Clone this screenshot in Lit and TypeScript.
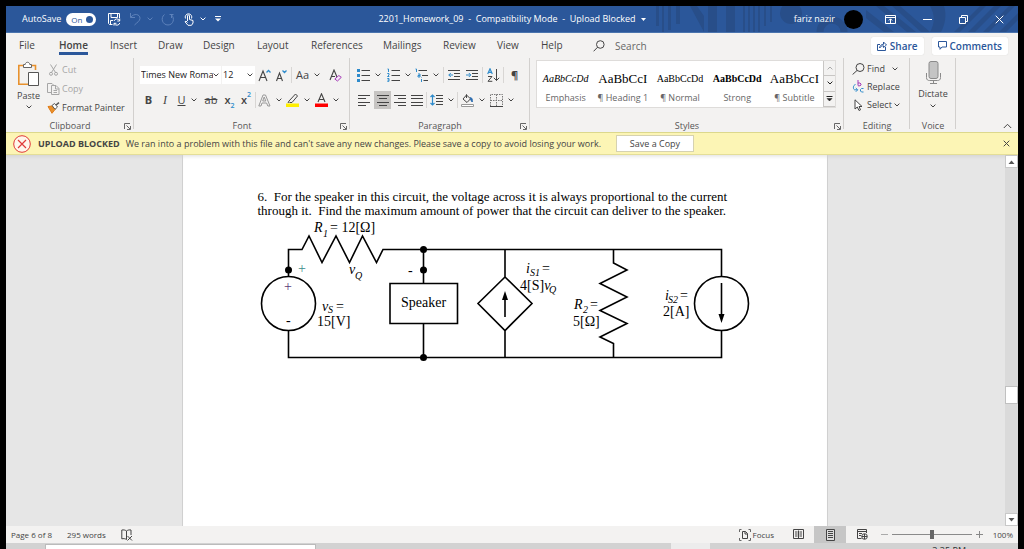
import { LitElement, html, svg, css, TemplateResult } from "lit";
import { customElement, property, state } from "lit/decorators.js";
import { classMap } from "lit/directives/class-map.js";

const icon = (w: number, h: number, body: unknown) =>
  html`<svg width=${w} height=${h} viewBox="0 0 ${w} ${h}" fill="none" stroke="#444" stroke-width="1" aria-hidden="true">${body}</svg>`;

const chevron = (color = "#444") => icon(6, 4, svg`<path d="M.6 .6L3 3L5.4 .6" stroke=${color}/>`);

const INK = "#444";
const BLUE = "#2e8bcb";

const icons = {
  save: icon(14, 14, svg`<g stroke="#fff"><path d="M5.5 12.5H2.5L1.5 11.5V1.5H12.5V6M4 1.5V5.5H10.5V1.5M3.5 12V8.5H6"/><path d="M7 9a3 3 0 0 1 5.5-.5M12.7 6.5V9H10.3M12.8 11a3 3 0 0 1-5.4 .8M7 13.6V11.3H9.4"/></g>`),
  undo: icon(12, 14, svg`<path stroke="#5d82bb" d="M1.5 1V5.5H6M1.7 5.3C5 1 11 2 11 6.3C11 9 8 10.500 5.500 13"/>`),
  redo: icon(14, 13, svg`<path stroke="#5d82bb" d="M3.500 1.500C-1 5 1.500 12 7 12S14 5 10.500 2M8.500 1.500H12.500M10.500 2V5"/>`),
  touch: icon(11, 14, svg`<g stroke="#fff"><path d="M4.500 9V4a1 1 0 0 1 2 0V7.500L10 8.500V11L8.500 13.300H5L2 9.800L3 9L4.500 10.500"/><path d="M2.500 6.500a3.300 3.300 0 1 1 6 0"/></g>`),
  customize: icon(8, 6, svg`<path stroke="#fff" d="M1 .5H7"/><path fill="#fff" stroke="none" d="M1 2.500H7L4 5.500Z"/>`),
  caret: icon(5, 3, svg`<path fill="#fff" stroke="none" d="M0 0H5L2.500 3Z"/>`),
  ribbonMode: icon(11, 9, svg`<g stroke="#fff"><path d="M.5 .5H10.500V8.500H.5ZM.5 2.500H10.500M5.500 8V4M3.800 5.500L5.500 3.800L7.200 5.500"/></g>`),
  minimize: icon(9, 9, svg`<path stroke="#fff" d="M0 4.500H9"/>`),
  restore: icon(9, 9, svg`<path stroke="#fff" d="M.5 2.500H6.500V8.500H.5ZM2.500 2.500V.5H8.500V6.500H6.500"/>`),
  close: icon(9, 9, svg`<path stroke="#fff" d="M.7 .7L8.300 8.300M8.300 .7L.7 8.300"/>`),
  search: icon(12, 12, svg`<circle cx="7.300" cy="4.500" r="3.800"/><path d="M4.600 7.200L.6 11.300"/>`),
  share: icon(10, 10, svg`<g stroke="#2b579a"><path d="M3 3.500H.5V9.500H8.500V6"/><path d="M2.500 7C3 4.500 4.500 3.300 6.500 3.300V1L9.500 4L6.500 6.500V4.800C5 4.800 3.800 5.500 2.500 7Z"/></g>`),
  comment: icon(9, 9, svg`<path stroke="#2b579a" d="M.5 .5H8.500V6H4L2 8.300V6H.5Z"/>`),
  paste: icon(23, 26, svg`<path stroke="#e8912d" stroke-width="1.600" d="M6 4.500H1.800V23.200H11M15 4.500H18.500V9"/><path fill="#fff" stroke="#666" d="M6.500 6.500V3.500H8.200C8.500 .5 12.500 .5 12.800 3.500H14.500V6.500Z"/><path fill="#fff" stroke="#555" d="M11.500 11.500H21.500V24.500H11.500Z"/>`),
  cut: icon(9, 12, svg`<g stroke="#a6a6a6"><path d="M1.500 .5L6.500 8.500M7.500 .5L2.500 8.500"/><circle cx="2" cy="9.800" r="1.500"/><circle cx="7" cy="9.800" r="1.500"/></g>`),
  copy: icon(13, 12, svg`<g stroke="#a6a6a6"><path d="M4 9.500H.5V.5H5L6.500 2"/><path d="M4.500 2.500H9L12 5.500V11.500H4.500ZM8.500 2.500V6H12M6.500 7.500H10M6.500 9.500H10"/></g>`),
  painter: icon(13, 12, svg`<path fill="#e8912d" stroke="#e07b16" d="M1 4.500L5 4L8 7.500L5 11.300Z"/><path fill="#fff" stroke="#555" d="M5 3.500L7.500 1.500L10.500 5L8 7.300Z"/><path stroke="#555" stroke-width="1.500" d="M9 3L12 .7"/>`),
  growA: icon(14, 13, svg`<path stroke-width="1.100" d="M1 12L5 2L9 12M2.500 8.500H7.500"/><path stroke=${BLUE} stroke-width="1.300" d="M8.500 3.500L10.500 1.500L12.500 3.500"/>`),
  shrinkA: icon(13, 13, svg`<path stroke-width="1.100" d="M1.500 12L4.500 4L7.500 12M2.500 9.500H6.500"/><path stroke=${BLUE} stroke-width="1.300" d="M7.500 1.500L9.500 3.500L11.500 1.500"/>`),
  clear: icon(13, 13, svg`<path stroke-width="1.100" d="M1 11L5 1L8 8M2.500 7.500H6"/><path fill="#f5e6f8" stroke="#a33bb5" d="M5.800 10L9.800 6.500L12.300 8.300L8.500 12Z"/>`),
  effects: icon(13, 13, svg`<path stroke="#999" d="M.8 12L5 1H7.500L12 12H9.800L8.600 9H4L3 12ZM4.700 7H7.800L6.200 3Z"/>`),
  highlight: icon(13, 14, svg`<path stroke=${INK} d="M3 8L9.500 1L11.500 3L6 9.500H3.500M3 8L2 10"/><path fill="#ffef00" stroke="none" d="M0 10.500H13V14H0Z"/>`),
  fontColor: icon(13, 14, svg`<path stroke-width="1.100" d="M3 9L6.500 .8L10 9M4.200 6.500H8.800"/><path fill="#f00" stroke="none" d="M0 10.500H13V14H0Z"/>`),
  bullets: icon(13, 13, svg`<path fill=${BLUE} stroke="none" d="M0 0H3V3H0ZM0 5H3V8H0ZM0 10H3V13H0Z"/><path d="M4.500 1.500H13M4.500 6.500H13M4.500 11.500H13"/>`),
  numbers: icon(13, 14, svg`<path stroke=${BLUE} d="M.5 1H1.500V4M.3 5.500H2V7L.5 8.500H2.300M.3 10.500H2V13.300H.3M.6 12H2"/><path d="M4.500 2.500H13M4.500 7.500H13M4.500 12.500H13"/>`),
  multi: icon(13, 14, svg`<path stroke=${BLUE} d="M.5 1H1.500V4M3 6H5V9H3V7.500H5M6.500 11V14M6.500 9.500V10"/><path d="M3.500 2.500H12M7 7.500H13M8.500 12.500H13"/>`),
  outdent: icon(12, 12, svg`<path d="M0 1.500H12M6 4.500H12M6 7.500H12M0 10.500H12"/><path stroke=${BLUE} d="M5 6H.8M2.800 4L.8 6L2.800 8"/>`),
  indent: icon(12, 12, svg`<path d="M0 1.500H12M6 4.500H12M6 7.500H12M0 10.500H12"/><path stroke=${BLUE} d="M0 6H4.500M2.800 4L4.800 6L2.800 8"/>`),
  sort: icon(13, 14, svg`<path stroke=${BLUE} stroke-width="1.200" d="M.7 6L3 .8L5.300 6M1.500 4.300H4.500"/><path d="M1 8.500H5L1 13.300H5.300M9.500 1V12.500M6.800 9.800L9.500 12.500L12.200 9.800"/>`),
  left: icon(12, 11, svg`<path d="M0 .5H12M0 3.500H8M0 7.500H12M0 10.500H8"/>`),
  center: icon(12, 11, svg`<path d="M0 .5H12M2 3.500H10M0 7.500H12M2 10.500H10"/>`),
  right: icon(12, 11, svg`<path d="M0 .5H12M4 3.500H12M0 7.500H12M4 10.500H12"/>`),
  justify: icon(12, 11, svg`<path d="M0 .5H12M0 3.500H12M0 7.500H12M0 10.500H12"/>`),
  spacing: icon(13, 12, svg`<path stroke=${BLUE} stroke-width="1.200" d="M2.500 1V11M.5 3L2.500 1L4.500 3M.5 9L2.500 11L4.500 9"/><path d="M6 1.500H13M6 4.500H13M6 7.500H13M6 10.500H13"/>`),
  bucket: icon(13, 13, svg`<path d="M5.500 1L9.500 4.800L6 8.500L2 5ZM5.500 .3V4"/><path fill="#2b6cb0" stroke="#2b6cb0" d="M9.500 3.500C11.500 4 11.500 6 11.200 8L9.800 6Z"/><path fill="#fff" stroke="#999" d="M.5 10.500H12.500V12.500H.5Z"/>`),
  borders: icon(13, 13, svg`<path stroke="#777" stroke-dasharray="1.500 1" d="M.5 12V.5H12.500V12M6.500 .5V12M.5 6.500H12.500"/><path d="M0 12.500H13"/>`),
  find: icon(13, 12, svg`<circle cx="8" cy="4.500" r="4"/><path d="M5 7.500L.6 11.500"/>`),
  replace: icon(12, 13, svg`<g stroke="#a33bb5"><path d="M5.500 0V5.500M5.500 3H7.500L8.500 4V5L7.500 5.800H5.500"/></g><g stroke=${BLUE}><path d="M3 4.500C.5 5 .3 9 2 9.800H5M3.300 8L5.200 9.800L3.300 11.800M11 8.500H9L8 9.500V11L9 12H11"/></g>`),
  select: icon(9, 12, svg`<path fill="#fff" d="M1 .8V10L3.300 8L5 11.500L6.500 10.800L5 7.500H8Z"/>`),
  mic: icon(15, 23, svg`<rect x="3" y=".5" width="9" height="17" rx="2" fill="#c4c4c4" stroke="#8a8a8a"/><path stroke="#8a8a8a" d="M.5 12V16.500C.5 19 2 19.500 3.500 19.500H11.500C13 19.500 14.500 19 14.500 16.500V12M7.500 19.500V22M4 22.500H11"/>`),
  launcher: icon(7, 7, svg`<path stroke="#666" d="M.5 6V.5H6M2.500 2.500L6 6M6.500 3V6.500H3"/>`),
  collapse: icon(9, 6, svg`<path d="M.8 5L4.500 1.300L8.200 5"/>`),
  blocked: icon(18, 18, svg`<g stroke="#e03a3a"><circle cx="9" cy="9" r="8.300" fill="#fff6ec"/><path stroke-width="1.200" d="M5 5L13 13M13 5L5 13"/></g>`),
  dismiss: icon(7, 7, svg`<path d="M.7 .7L6.300 6.300M6.300 .7L.7 6.300"/>`),
  proof: icon(12, 12, svg`<path d="M5.500 2V10.500M5.500 2C4 .8 2.500 .8 .8 1V9.800C2.500 9.500 4 9.500 5.500 10.500M5.500 2C7 .8 8.500 .8 10 1V6M6.500 7L11 11.500M11 7L6.500 11.500"/>`),
  focus: icon(12, 12, svg`<path stroke="#666" d="M2.500 .5H.5V3M.5 9V11.500H2.500M9.500 .5H11.500V3M11.500 9V11.500H9.500"/><path d="M3.500 2.500H6.500L8.500 4.500V9.500H3.500ZM6 2.500V5H8.500"/>`),
  read: icon(11, 11, svg`<path d="M5.500 1.500V10M.5 .5H10.500V9.500H.5ZM2 3H4.500M2 5H4.500M2 7H4.500M6.500 3H9M6.500 5H9M6.500 7H9"/>`),
  print: icon(9, 12, svg`<path fill="#dcdcdc" d="M.5 .5H8.500V11.500H.5Z"/><path d="M2 2.500H7M2 4.500H7M2 6.500H7M2 8.500H7"/>`),
  web: icon(11, 11, svg`<path d="M4.500 9.500H.5V.5H9.500V4M.5 2.500H9.500M2 4.500H5M2 6.500H4"/><circle cx="7.500" cy="7.500" r="2.800"/><path d="M5 7.500H10M7.500 5V10"/>`),
};

/** Named block of the ribbon with a caption along its bottom edge. */
@customElement("ribbon-group")
export class RibbonGroup extends LitElement {
  @property() label = "";
  @property({ type: Boolean }) launcher = false;

  static styles = css`
    :host { display: flex; flex-direction: column; box-sizing: border-box; background: linear-gradient(#d2d0ce, #d2d0ce) right top / 1px 71px no-repeat; }
    .body { flex: 1; min-height: 0; }
    .foot { display: grid; grid-template-columns: 10px 1fr 10px; align-items: center; height: 12px; font-size: 9px; color: #555; text-align: center; white-space: nowrap; }
    .foot span { grid-column: 2; }
    button { border: 0; padding: 0; background: none; display: flex; }
    svg { display: block; }
  `;

  render() {
    return html`
      <div class="body"><slot></slot></div>
      <div class="foot">
        <span>${this.label}</span>
        ${this.launcher ? html`<button aria-label="${this.label} settings">${icons.launcher}</button>` : ""}
      </div>`;
  }
}

/** The circuit that belongs to problem 6. */
@customElement("circuit-figure")
export class CircuitFigure extends LitElement {
  static styles = css`
    :host { display: block; }
    svg { display: block; }
    text { font: 14px "Liberation Serif", serif; fill: #000; }
    text.i, .i { font-style: italic; }
    text.sub { font-style: italic; font-size: 10px; }
    text.teal { fill: #3a8c8c; }
    text.plum { fill: #5a3a78; }
    .wire { fill: none; stroke: #000; stroke-width: 1.600; }
  `;

  render() {
    return html`<svg width="492" height="144" viewBox="258 218 492 144" role="img" aria-label="Circuit diagram">
      <g class="wire">
        <path d="M288.500 277V249.500H302L309 236L322 262.500L336 236L349.500 262.500L362.500 236L376.500 262.500L383 249.500H721.500V277"/>
        <path d="M288.500 330V357.500H721.500V330"/>
        <circle cx="288.500" cy="303.500" r="27"/>
        <circle cx="721.500" cy="303.500" r="27"/>
        <path d="M423.500 249.500V283.500M423.500 323.500V357.500M390 283.500H457.500V323.500H390Z"/>
        <path d="M505 249.500V277L532 303.500L505 330.500L478 303.500L505 277M505 330.500V357.500"/>
        <path d="M613.500 249.500V263L627 270L600 283.500L627 297L600 310.500L627 323.500L600 337L613.500 343.500V357.500"/>
        <path d="M505 317V297M721.500 283V316"/>
      </g>
      <path d="M505 291L508 300H502ZM721.500 323L718.500 314H724.500Z"/>
      <circle cx="288.500" cy="270" r="3.500"/>
      <circle cx="423.500" cy="249.500" r="3.500"/>
      <circle cx="423.500" cy="270" r="3.500"/>
      <circle cx="423.500" cy="357.500" r="3.500"/>
      <text class="i" x="314" y="232">R</text><text class="sub" x="323" y="237">1</text><text x="330" y="232">= 12[Ω]</text>
      <text class="teal" x="298" y="273">+</text>
      <text class="plum" x="284" y="291">+</text>
      <text x="286" y="325">-</text>
      <text class="i" x="349" y="274">v</text><text class="sub" x="355" y="279">Q</text>
      <text x="408" y="275">-</text>
      <text class="i" x="322" y="311">v</text><text class="sub" x="328" y="313">S</text><text x="336" y="311">=</text>
      <text x="317" y="326">15[V]</text>
      <text x="401" y="307">Speaker</text>
      <text class="i" x="526" y="273">i</text><text class="sub" x="530" y="276">S1</text><text x="542" y="273">=</text>
      <text x="520" y="290">4[S]<tspan class="i">v</tspan></text><text class="sub" x="549" y="293">Q</text>
      <text class="i" x="574" y="309">R</text><text class="sub" x="583" y="313">2</text><text x="590" y="309">=</text>
      <text x="573" y="326">5[Ω]</text>
      <text class="i" x="665" y="300">i</text><text class="sub" x="668" y="303">S2</text><text x="680" y="300">=</text>
      <text x="663" y="316">2[A]</text>
    </svg>`;
  }
}

@customElement("app-root")
export class AppRoot extends LitElement {
  @state() private tab = "Home";
  @state() private zoomLevel = 100;

  private tabs = ["File", "Home", "Insert", "Draw", "Design", "Layout", "References", "Mailings", "Review", "View", "Help"];
  private gallery = [
    { name: "Emphasis", sample: "AaBbCcDd", kind: "emphasis" },
    { name: "¶ Heading 1", sample: "AaBbCcI", kind: "large" },
    { name: "¶ Normal", sample: "AaBbCcDd", kind: "normal" },
    { name: "Strong", sample: "AaBbCcDd", kind: "strong" },
    { name: "¶ Subtitle", sample: "AaBbCcI", kind: "large" },
  ];

  static styles = css`
    :host { display: flex; flex-direction: column; box-sizing: border-box; height: 100vh; padding: 6px 6px 0; background: #000; font: 10px/14px "Open Sans", "Noto Sans", sans-serif; color: #444; }
    * { box-sizing: border-box; }
    svg { display: block; flex: none; }
    button, input, select { font: inherit; color: inherit; border: 0; padding: 0; margin: 0; background: none; border-radius: 0; }
    button { display: flex; align-items: center; white-space: nowrap; }

    .title { position: relative; display: grid; grid-template-columns: 1fr auto 1fr; align-items: center; height: 27px; flex: none; background: #2b579a; color: #fff; border-bottom: 1px solid #4a74ae; font-size: 9px; }
    .art { position: absolute; right: 0; top: 0; }
    .quick { display: flex; align-items: center; padding-left: 16px; }
    .auto { display: flex; align-items: center; gap: 5px; }
    .switch { display: grid; width: 30px; height: 13px; }
    .switch > * { grid-area: 1 / 1; }
    .switch input { appearance: none; width: 30px; height: 13px; border-radius: 7px; background: #fff; display: flex; align-items: center; justify-content: flex-end; padding-right: 3px; }
    .switch input::after { content: ""; width: 7px; height: 7px; border-radius: 50%; background: #2b579a; }
    .switch span { color: #2b579a; font-size: 8px; line-height: 13px; padding-left: 5px; pointer-events: none; }
    .tools { display: flex; align-items: center; gap: 8px; padding-left: 11px; }
    .tools .split { gap: 6px; }
    .name { gap: 5px; position: relative; }
    .account { display: flex; align-items: center; justify-content: flex-end; position: relative; padding-right: 14px; }
    .avatar { width: 19px; height: 19px; border-radius: 50%; background: #000; margin: 0 22px 0 9px; }
    .window { display: flex; gap: 27px; }

    .tabs { display: flex; align-items: center; height: 25px; flex: none; background: #f3f2f1; padding: 0 10px 0 13px; }
    .strip { display: grid; align-self: flex-start; grid-template-columns: 40px 51px 48px 45px 54px 54px 72px 60px 54px 44px 52px; }
    .tab { justify-self: start; height: 22px; border-bottom: 3px solid transparent; border-top: 4px solid transparent; }
    .tab.on { font-weight: 600; border-bottom-color: #2b579a; }
    .search { display: flex; align-items: center; gap: 10px; flex: 1; }
    .search input { width: 60px; }
    .search input::placeholder { color: #666; opacity: 1; }
    .action { height: 18px; padding: 0 6px; gap: 3px; background: #fff; color: #2b579a; font-weight: 600; border-radius: 2px; box-shadow: 0 0 1px #c8c6c4; }
    .action + .action { margin-left: 8px; }

    .ribbon { display: flex; flex: none; height: 74px; background: #f3f2f1; font-size: 9px; line-height: 12px; }
    .clipboard { width: 128px; }
    .font { width: 216px; }
    .paragraph { width: 180px; }
    .styles { flex: 1; min-width: 0; }
    .editing { width: 66px; }
    .voice { width: 46px; }
    .tail { width: 62px; display: flex; align-items: flex-end; justify-content: flex-end; padding: 0 6px 3px 0; }
    .clip { display: flex; padding: 3px 0 0 11px; gap: 7px; }
    .big { flex-direction: column; gap: 3px; align-self: flex-start; }
    .list { display: flex; flex-direction: column; gap: 6px; padding-top: 2px; }
    .item { height: 13px; gap: 2px; }
    .item.off { color: #a6a6a6; }
    .item svg:first-child { width: 13px; }
    .rows { display: flex; flex-direction: column; gap: 7px; padding: 8px 0 0 6px; }
    .row { display: grid; align-items: center; justify-items: center; height: 18px; }
    .font1 { grid-template-columns: 82px 34px 17px 17px 2px 32px 22px; }
    .font2 { grid-template-columns: 17px 16px 28px 20px 17px 16px 2px 28px 28px 30px; }
    .para1 { grid-template-columns: 30px 29px 28px 4px 18px 18px 3px 18px 3px 19px; }
    .para2 { grid-template-columns: 20px 17px 17px 17px 3px 28px 2px 30px 28px; }
    .rows.para { padding-left: 4px; }
    .row button { justify-content: center; gap: 5px; height: 18px; font-size: 11px; }
    .row button.on { width: 17px; background: #c6c4c2; }
    .rule { width: 1px; height: 16px; background: #d8d6d4; }
    .combo { display: grid; grid-template-columns: 1fr 8px; align-items: center; background: #fff; height: 18px; width: 81px; color: #222; justify-self: start; }
    .combo.small { width: 33px; }
    .combo select { appearance: none; grid-area: 1 / 1; width: 100%; height: 18px; padding-left: 1px; overflow: hidden; }
    .combo svg { grid-area: 1 / 2; }
    .b { font-weight: 700; }
    .i { font: italic 12px "Liberation Serif", serif; }
    .u { text-decoration: underline; }
    .s { text-decoration: line-through; }
    .low, .high { font-size: 7px; color: #2e8bcb; line-height: 7px; }
    .low { align-self: flex-end; }
    .high { align-self: flex-start; }
    .row .tight { gap: 0; font-weight: 600; }
    .gallery { display: flex; margin: 2px 8px 0 6px; height: 48px; border: 1px solid #dedcda; background: #fff; }
    .style { flex: 1 1 0; min-width: 0; flex-direction: column; justify-content: flex-end; gap: 6px; padding-bottom: 3px; overflow: hidden; color: #666; }
    .sample { font: 10px/14px "Liberation Serif", serif; color: #000; }
    .sample.large { font-size: 13px; }
    .sample.strong { font-weight: 700; }
    .sample.emphasis { font-style: italic; }
    .spin { display: grid; grid-template-rows: 1fr 1fr 1fr; width: 12px; background: #f3f2f1; border-left: 1px solid #c8c6c4; }
    .spin button { justify-content: center; border-bottom: 1px solid #c8c6c4; }
    .edit { padding: 4px 0 0 8px; gap: 5px; display: flex; flex-direction: column; }
    .talk { padding-top: 3px; display: flex; justify-content: center; }
    .talk .big { gap: 4px; }

    .message { display: flex; align-items: center; flex: none; height: 23px; padding: 0 8px 0 7px; background: #fcf5b5; border-top: 1px solid #dcd88c; border-bottom: 1px solid #e4de98; font-size: 9px; }
    .message strong { margin: 0 6px 0 7px; font-weight: 700; }
    .message p { margin: 0; white-space: nowrap; }
    .copy { height: 17px; width: 78px; justify-content: center; margin-left: 15px; background: #fff; border: 1px solid #d6d2b0; }
    .copy + button { margin-left: auto; }

    .desk { display: flex; flex: 1; min-height: 0; background: #e6e6e6; box-shadow: inset 0 4px 4px -3px #d0d0d0; }
    .canvas { flex: 1; min-width: 0; display: flex; justify-content: center; overflow: hidden; padding-right: 2px; }
    .sheet { width: 646px; background: #fff; border: solid #d0d0d0; border-width: 0 1px; padding: 35px 0 0 75px; box-shadow: inset 0 4px 4px -3px #ddd; }
    .sheet p { margin: 0; font: 13px/14px "Liberation Serif", serif; color: #000; white-space: pre; }
    .scroll { width: 13px; display: flex; flex-direction: column; background: #dadada; }
    .scroll button { height: 13px; justify-content: center; background: #fff; border: 1px solid #c8c8c8; }
    .track { flex: 1; display: grid; grid-template-rows: 217fr 18px 108fr; }
    .thumb { grid-row: 2; background: #fff; border: 1px solid #c0c0c0; }

    .status { display: flex; align-items: center; flex: none; height: 17px; background: #f3f2f1; font-size: 8px; padding: 0 5px; }
    .status .words { margin: 0 15px; }
    .status .focus { margin-left: auto; gap: 2px; }
    .view { height: 17px; width: 32px; justify-content: center; }
    .view.on { background: #c6c6c6; }
    .views { display: flex; padding-left: 8px; }
    .zoom { display: flex; align-items: center; gap: 4px; padding-left: 3px; }
    .zoom input { appearance: none; width: 80px; height: 10px; background: linear-gradient(#8a8a8a, #8a8a8a) center / 100% 1px no-repeat; }
    .zoom input::-webkit-slider-thumb { appearance: none; width: 4px; height: 9px; background: #666; }
    .percent { width: 30px; text-align: right; }

    .taskbar { display: flex; flex: none; height: 6px; overflow: hidden; background: #d2d2d2; margin: 0 -6px; padding-left: 45px; border-left: 6px solid #000; border-right: 6px solid #000; }
    .find { width: 271px; margin: 1px 0 0 -6px; background: #fff; border: 1px solid #bbb; border-bottom: 0; }
    .running { width: 39px; background: #ececec; margin-left: 355px; }
    .clock { margin-left: auto; padding: 2px 52px 0 0; font-size: 9px; line-height: 12px; color: #333; }
  `;

  private cmd(label: string, body: unknown, more = false, extra = "") {
    return html`<button class=${extra} aria-label=${label}>${body}${more ? chevron() : ""}</button>`;
  }

  private renderTitle(): TemplateResult {
    return html`
      <header class="title">
        <svg class="art" width="364" height="26" viewBox="0 0 364 26" fill="#284e89" stroke="none" aria-hidden="true">
          <path d="M2 0H5V20H2ZM8 0H10V26H8ZM14 0H17V24H14ZM22 0H26V18H22ZM36 0H43L50 10V26ZM54 0H63V26H54ZM72 0H81V26H72ZM89 0H91V26H89ZM94 0H96V26H94ZM99 0H101V26H99ZM104 0H106V26H104ZM110 0H112V20H110ZM116 0H118V16H116Z"/>
          <circle cx="137" cy="7" r="11"/>
          <circle cx="178" cy="26" r="12" fill="none" stroke="#284e89" stroke-width="7"/>
          <path d="M212 4L240 26H230L212 12ZM222 0H230L262 26H253ZM238 0H246L276 26H267ZM276 0H290C293 9 291 19 287 26H276C281 17 281 9 276 0ZM300 26L326 0H332L306 26ZM314 26L340 0H347L321 26ZM329 26L355 0H361L335 26ZM345 26L364 7V14L352 26Z"/>
        </svg>
        <div class="quick">
          <label class="auto">AutoSave
            <span class="switch"><input type="checkbox" role="switch" checked /><span>On</span></span>
          </label>
          <div class="tools">
            <button aria-label="Save">${icons.save}</button>
            <button class="split" aria-label="Undo">${icons.undo}${chevron("#5d82bb")}</button>
            <button aria-label="Redo">${icons.redo}</button>
            <button class="split" aria-label="Touch mode">${icons.touch}${chevron("#fff")}</button>
            <button aria-label="Customize toolbar">${icons.customize}</button>
          </div>
        </div>
        <button class="name">2201_Homework_09 &nbsp;-&nbsp; Compatibility Mode &nbsp;-&nbsp; Upload Blocked ${icons.caret}</button>
        <div class="account">
          <span>fariz nazir</span><span class="avatar"></span>
          <div class="window">
            <button aria-label="Ribbon display">${icons.ribbonMode}</button>
            <button aria-label="Minimize">${icons.minimize}</button>
            <button aria-label="Restore">${icons.restore}</button>
            <button aria-label="Close">${icons.close}</button>
          </div>
        </div>
      </header>`;
  }

  private renderTabs() {
    return html`
      <nav class="tabs">
        <div class="strip">
          ${this.tabs.map((t) => html`<button class=${classMap({ tab: true, on: t === this.tab })} @click=${() => (this.tab = t)}>${t}</button>`)}
        </div>
        <label class="search">${icons.search}<input type="text" placeholder="Search" aria-label="Search" /></label>
        <button class="action">${icons.share}Share</button>
        <button class="action">${icons.comment}Comments</button>
      </nav>`;
  }

  private renderRibbon() {
    return html`
      <section class="ribbon">
        <ribbon-group class="clipboard" label="Clipboard" launcher>
          <div class="clip">
            <button class="big">${icons.paste}<span>Paste</span>${chevron()}</button>
            <div class="list">
              <button class="item off">${icons.cut}Cut</button>
              <button class="item off">${icons.copy}Copy</button>
              <button class="item">${icons.painter}Format Painter</button>
            </div>
          </div>
        </ribbon-group>
        <ribbon-group class="font" label="Font" launcher>
          <div class="rows">
            <div class="row font1">
              <div class="combo"><select aria-label="Font"><option>Times New Roman</option></select>${chevron()}</div>
              <div class="combo small"><select aria-label="Font size"><option>12</option></select>${chevron()}</div>
              ${this.cmd("Grow font", icons.growA)}
              ${this.cmd("Shrink font", icons.shrinkA)}
              <span class="rule"></span>
              ${this.cmd("Change case", "Aa", true)}
              ${this.cmd("Clear formatting", icons.clear)}
            </div>
            <div class="row font2">
              ${this.cmd("Bold", "B", false, "b")}
              ${this.cmd("Italic", html`<span class="i">I</span>`)}
              ${this.cmd("Underline", html`<span class="u">U</span>`, true)}
              ${this.cmd("Strikethrough", html`<span class="s">ab</span>`)}
              ${this.cmd("Subscript", html`x<span class="low">2</span>`, false, "tight")}
              ${this.cmd("Superscript", html`x<span class="high">2</span>`, false, "tight")}
              <span class="rule"></span>
              ${this.cmd("Text effects", icons.effects, true)}
              ${this.cmd("Highlight", icons.highlight, true)}
              ${this.cmd("Font color", icons.fontColor, true)}
            </div>
          </div>
        </ribbon-group>
        <ribbon-group class="paragraph" label="Paragraph" launcher>
          <div class="rows para">
            <div class="row para1">
              ${this.cmd("Bullets", icons.bullets, true)}
              ${this.cmd("Numbering", icons.numbers, true)}
              ${this.cmd("Multilevel list", icons.multi, true)}
              <span class="rule"></span>
              ${this.cmd("Decrease indent", icons.outdent)}
              ${this.cmd("Increase indent", icons.indent)}
              <span class="rule"></span>
              ${this.cmd("Sort", icons.sort)}
              <span class="rule"></span>
              ${this.cmd("Show marks", html`<b>¶</b>`)}
            </div>
            <div class="row para2">
              ${this.cmd("Align left", icons.left)}
              ${this.cmd("Center", icons.center, false, "on")}
              ${this.cmd("Align right", icons.right)}
              ${this.cmd("Justify", icons.justify)}
              <span class="rule"></span>
              ${this.cmd("Line spacing", icons.spacing, true)}
              <span class="rule"></span>
              ${this.cmd("Shading", icons.bucket, true)}
              ${this.cmd("Borders", icons.borders, true)}
            </div>
          </div>
        </ribbon-group>
        <ribbon-group class="styles" label="Styles" launcher>
          <div class="gallery">
            ${this.gallery.map((s) => html`<button class="style"><span class="sample ${s.kind}">${s.sample}</span><span>${s.name}</span></button>`)}
            <div class="spin">
              <button aria-label="Previous styles">${icon(6, 4, svg`<path stroke="#aaa" d="M.6 3.400L3 1L5.400 3.400"/>`)}</button>
              <button aria-label="Next styles">${chevron("#222")}</button>
              <button aria-label="More styles">${icon(7, 6, svg`<path d="M.5 .5H6.500" stroke="#222"/><path d="M1 2.500H6L3.500 5Z" fill="#222" stroke="#222" stroke-width=".5"/>`)}</button>
            </div>
          </div>
        </ribbon-group>
        <ribbon-group class="editing" label="Editing">
          <div class="edit">
            <button class="item">${icons.find}Find &nbsp;${chevron()}</button>
            <button class="item">${icons.replace}Replace</button>
            <button class="item">${icons.select}Select${chevron()}</button>
          </div>
        </ribbon-group>
        <ribbon-group class="voice" label="Voice">
          <div class="talk"><button class="big">${icons.mic}<span>Dictate</span>${chevron()}</button></div>
        </ribbon-group>
        <div class="tail"><button aria-label="Collapse ribbon">${icons.collapse}</button></div>
      </section>`;
  }

  render() {
    return html`
      ${this.renderTitle()}
      ${this.renderTabs()}
      ${this.renderRibbon()}
      <section class="message" role="alert">
        ${icons.blocked}<strong>UPLOAD BLOCKED</strong>
        <p>We ran into a problem with this file and can't save any new changes. Please save a copy to avoid losing your work.</p>
        <button class="copy">Save a Copy</button>
        <button aria-label="Dismiss">${icons.dismiss}</button>
      </section>
      <main class="desk">
        <div class="canvas">
          <article class="sheet">
            <p>6.  For the speaker in this circuit, the voltage across it is always proportional to the current
through it.  Find the maximum amount of power that the circuit can deliver to the speaker.</p>
            <circuit-figure></circuit-figure>
          </article>
        </div>
        <div class="scroll">
          <button aria-label="Scroll up">${icon(7, 4, svg`<path fill="#555" stroke="none" d="M.5 4L3.500 .5L6.500 4Z"/>`)}</button>
          <div class="track"><div class="thumb"></div></div>
          <button aria-label="Scroll down">${icon(7, 4, svg`<path fill="#555" stroke="none" d="M.5 0L3.500 3.500L6.500 0Z"/>`)}</button>
        </div>
      </main>
      <footer class="status">
        <span>Page 6 of 8</span><span class="words">295 words</span><button aria-label="Proofing">${icons.proof}</button>
        <button class="focus">${icons.focus}Focus</button>
        <div class="views">
          <button class="view" aria-label="Read mode">${icons.read}</button>
          <button class="view on" aria-label="Print layout">${icons.print}</button>
          <button class="view" aria-label="Web layout">${icons.web}</button>
        </div>
        <div class="zoom">
          <button aria-label="Zoom out">${icon(7, 7, svg`<path stroke="#aaa" d="M0 3.500H7"/>`)}</button>
          <input type="range" min="0" max="200" .value=${String(this.zoomLevel)} aria-label="Zoom"
            @input=${(e: Event) => (this.zoomLevel = Number((e.target as HTMLInputElement).value))} />
          <button aria-label="Zoom in">${icon(7, 7, svg`<path stroke="#888" d="M0 3.500H7M3.500 0V7"/>`)}</button>
        </div>
        <span class="percent">${this.zoomLevel}%</span>
      </footer>
      <div class="taskbar"><div class="find"></div><div class="running"></div><span class="clock">3:35 PM</span></div>`;
  }
}
